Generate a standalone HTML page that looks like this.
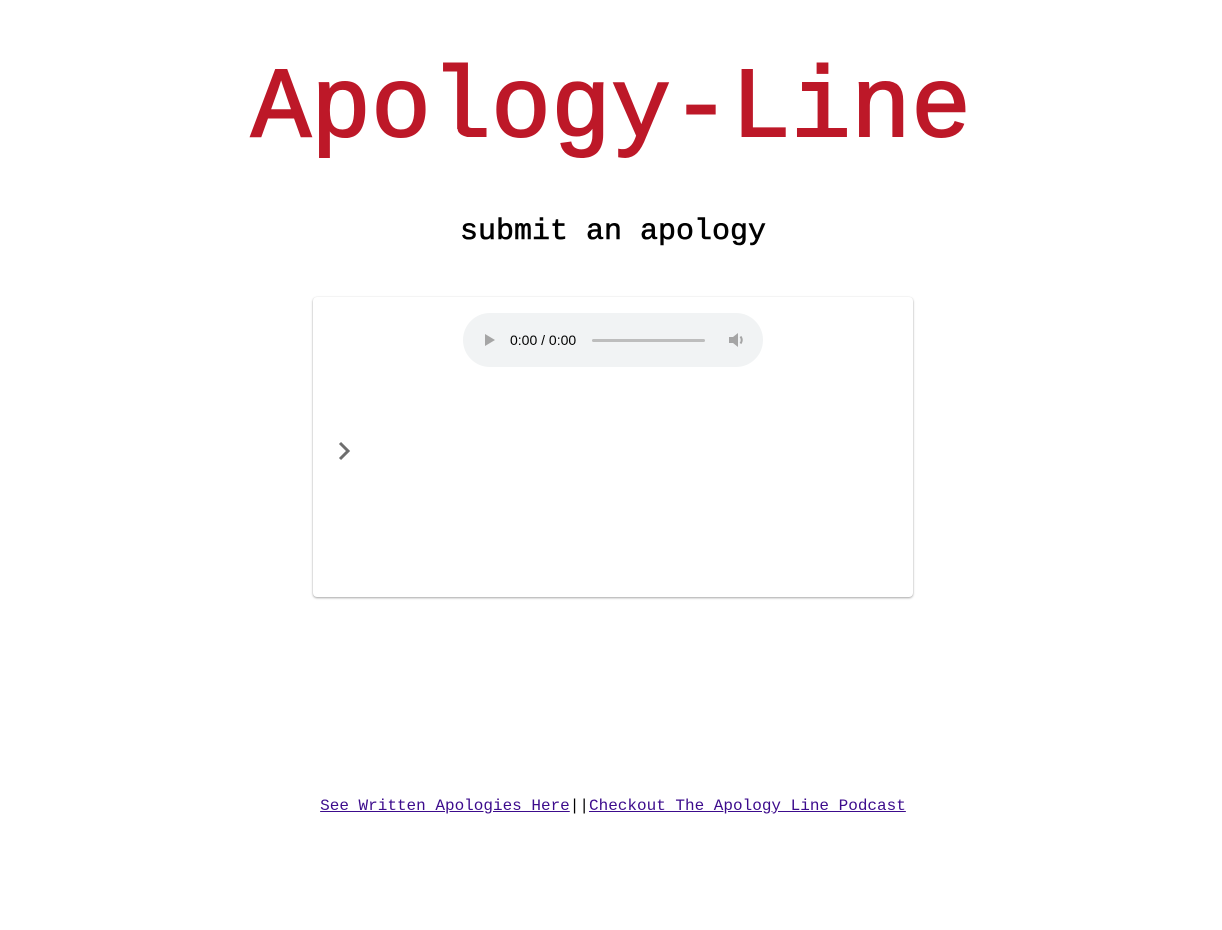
<!DOCTYPE html>
<html><head><style>
body{margin:0;background:#fff;width:1222px;height:930px;position:relative;font-family:"Liberation Mono",monospace}
.t{position:absolute;left:0;width:1222px;text-align:center;top:56px;font-size:100px;line-height:110px;color:#bd1828;font-weight:normal;margin:0;-webkit-text-stroke:2px #bd1828}
.s{position:absolute;left:2px;width:1222px;text-align:center;top:214px;font-size:30px;line-height:36px;font-weight:normal;color:#000;-webkit-text-stroke:0.6px #000}
.card{position:absolute;left:313px;top:297px;width:600px;height:300px;background:#fff;border-radius:4px;box-shadow:0 1px 2px rgba(0,0,0,.35),0 0 1px rgba(0,0,0,.08)}
.audio{position:absolute;left:150px;top:16px;width:300px;height:54px;border-radius:27px;background:#f1f3f4;font-family:"Liberation Sans",sans-serif;font-size:14px;color:#000}
.f{position:absolute;left:2px;width:1222px;text-align:center;top:796px;font-size:16px;line-height:20px;color:#000}
.f a{color:#3c0b8c;text-decoration:underline}
</style></head><body>
<h1 class="t">Apology-Line</h1>
<div class="s">submit an apology</div>
<div class="card">
 <div class="audio">
  <svg style="position:absolute;left:22px;top:21px" width="10" height="12"><path d="M0 0L10 6L0 12Z" fill="#a5a5a5"/></svg>
  <span style="position:absolute;left:47px;top:19px">0:00 / 0:00</span>
  <div style="position:absolute;left:129px;top:26px;width:113px;height:3px;background:#bdbdbd;border-radius:2px"></div>
  <svg style="position:absolute;left:265px;top:19px" width="18" height="16" viewBox="0 0 18 16"><path d="M1 5H5L10 1V15L5 11H1Z" fill="#a5a5a5"/><path d="M12.5 4.5Q15 8 12.5 11.5" stroke="#a5a5a5" stroke-width="2" fill="none"/></svg>
 </div>
 <svg style="position:absolute;left:24px;top:144px" width="16" height="20"><path d="M3 2L11 10L3 18" stroke="#6e6e6e" stroke-width="3" fill="none"/></svg>
</div>
<div class="f"><a>See Written Apologies Here</a>||<a>Checkout The Apology Line Podcast</a></div>
</body></html>
